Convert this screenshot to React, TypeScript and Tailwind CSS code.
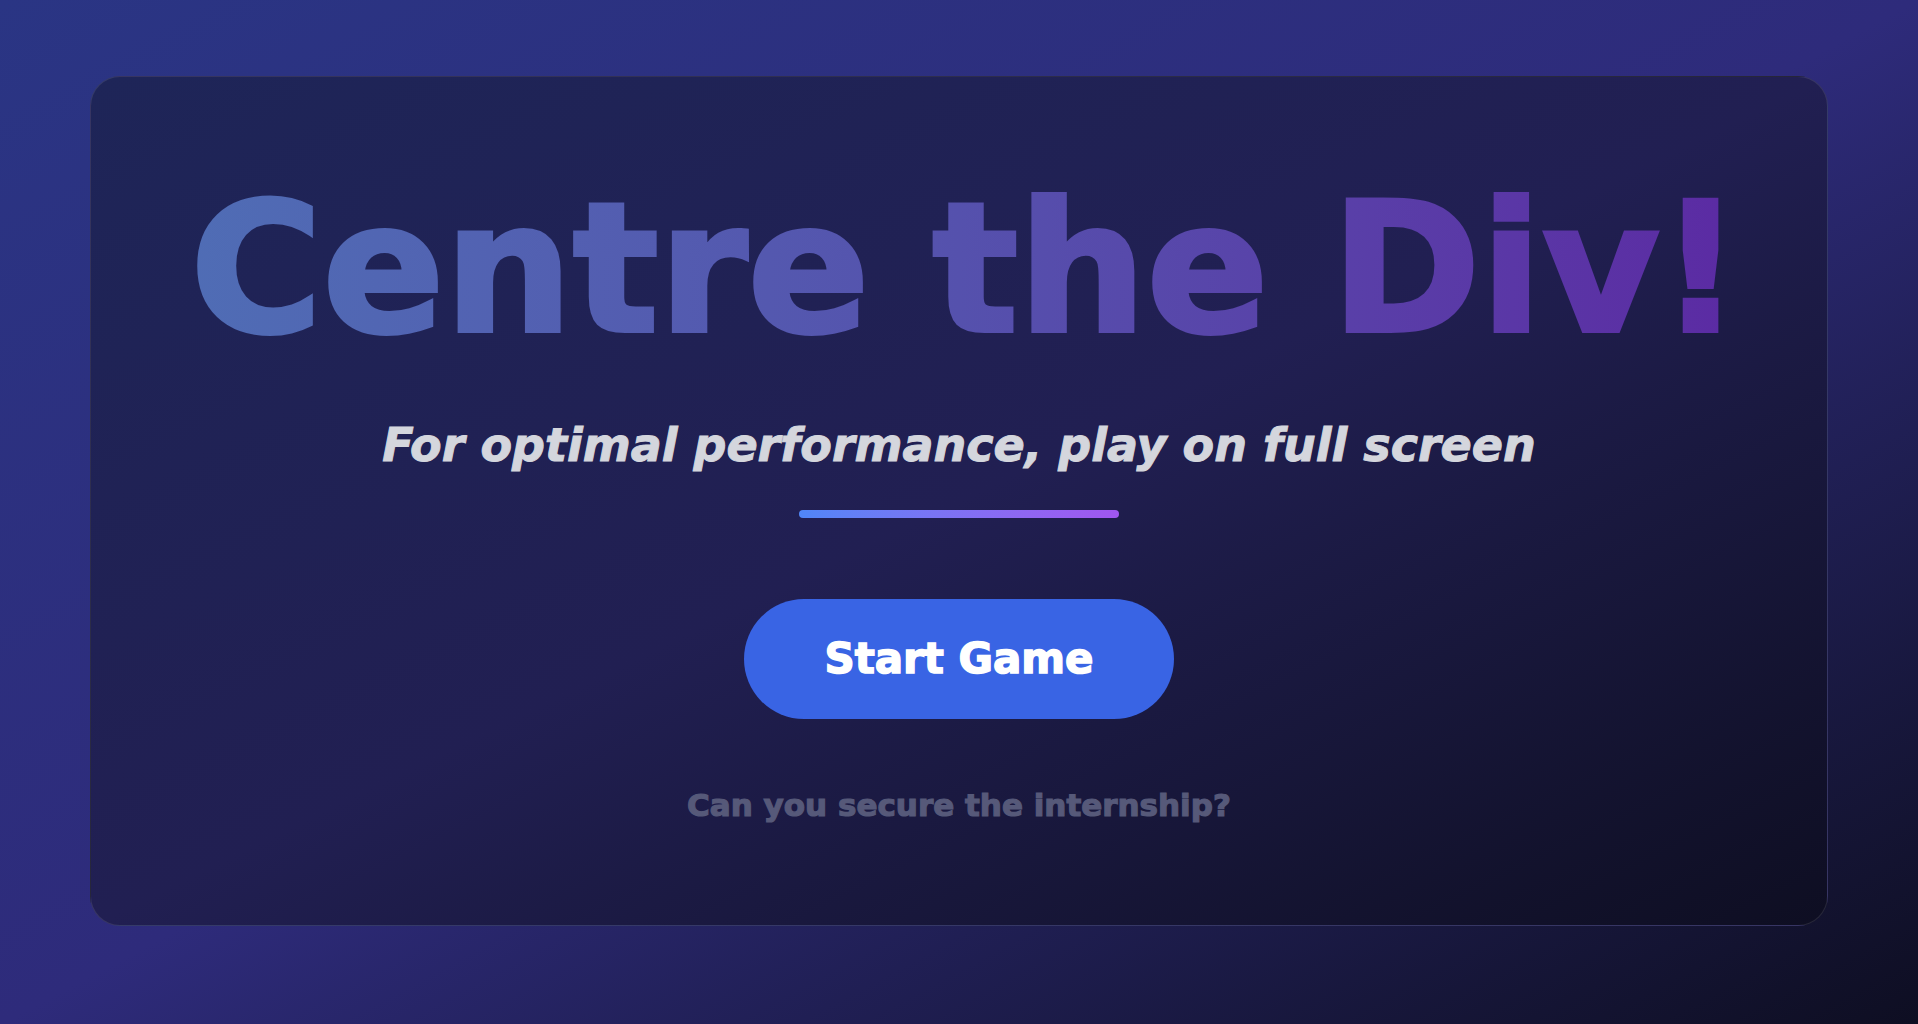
import React from 'react'

const font = { fontFamily: '"DejaVu Sans", "Liberation Sans", sans-serif' }

export default function App() {
  return (
    <div
      className="min-h-screen w-full flex justify-center pt-[76px] bg-gradient-to-br from-[#2a3584] via-[#2e2b7b] to-[#0e0e22]"
      style={font}
    >
      {/* Card */}
      <div className="w-[1738px] h-[850px] rounded-[30px] border border-white/10 bg-gradient-to-br from-[#1e2558] via-[#211f52] to-[#0e0e22] flex flex-col items-center pt-[102px]">
        <h1 className="inline-block pl-[14px] text-[180px] leading-none font-bold bg-gradient-to-r from-[#4f6db5] via-[#5551ad] to-[#5b2aa3] bg-clip-text text-transparent whitespace-nowrap [-webkit-text-stroke:4px_transparent]">
          Centre the Div!
        </h1>

        <p className="mt-[63px] text-[46px] leading-none font-bold italic text-[#d4d6dd] whitespace-nowrap [-webkit-text-stroke:1px_#d4d6dd]">
          For optimal performance, play on full screen
        </p>

        <div className="mt-[42px] w-[320px] h-2 rounded-full bg-gradient-to-r from-[#4f86f7] to-[#a056f0]" />

        <button className="mt-[81px] w-[430px] h-[120px] rounded-full bg-[#3964e4] text-white text-[42px] leading-none font-bold flex items-center justify-center [-webkit-text-stroke:1.5px_white]">
          Start Game
        </button>

        <p className="mt-[71px] text-[31px] leading-none font-bold text-[#565979] whitespace-nowrap [-webkit-text-stroke:1.2px_#565979]">
          Can you secure the internship?
        </p>
      </div>
    </div>
  )
}
